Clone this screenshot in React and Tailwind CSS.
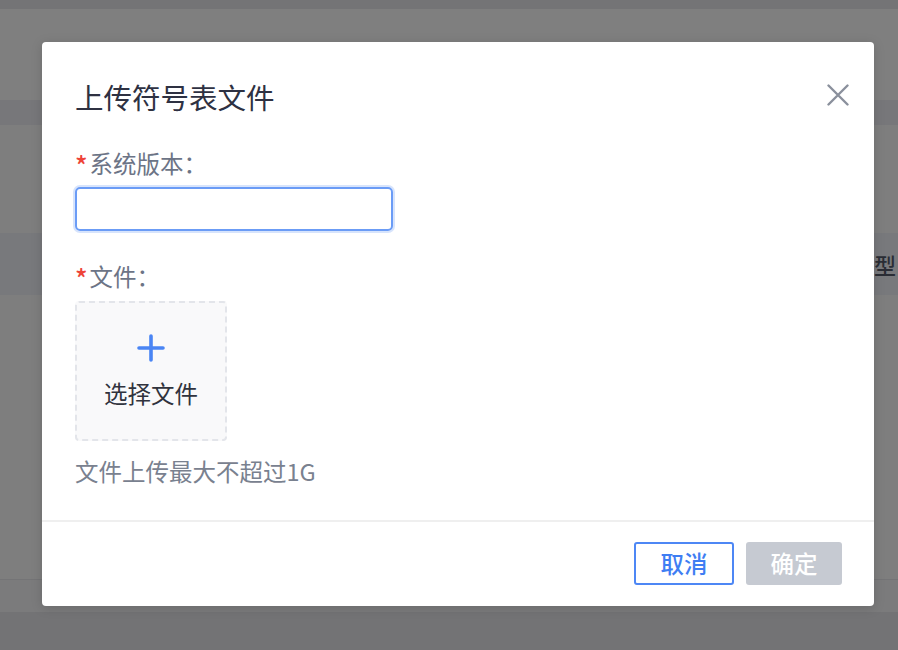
import React, { useState } from 'react';

const font = { fontFamily: '"Noto Sans CJK SC", "Noto Sans", sans-serif' };

const UploadSymbolDialog = () => {
    const [version, setVersion] = useState('');

    return (
        <div className="absolute left-[42px] top-[42px] w-[832px] h-[564px] bg-white rounded-[4px] shadow-[0_2px_12px_rgba(0,0,0,0.15)] flex flex-col">
            {/* Header */}
            <div className="relative pt-[38px] px-[33px]">
                <h2 className="text-[28.5px] leading-[34px] font-normal text-[#2e3142]">上传符号表文件</h2>
                <button className="absolute right-[25px] top-[42px] w-[22px] h-[22px] flex items-center justify-center">
                    <svg width="22" height="22" viewBox="0 0 22 22" fill="none">
                        <path d="M1.5 1.5 L20.5 20.5 M20.5 1.5 L1.5 20.5" stroke="#8a909c" strokeWidth="2.4" strokeLinecap="round" />
                    </svg>
                </button>
            </div>

            {/* Body */}
            <div className="px-[33px] flex-1">
                <label className="mt-[36px] flex items-center h-[28px] text-[23.5px] text-[#6c7486]">
                    <span className="text-[#ee4438] mr-[2px] text-[26px] font-medium leading-none mt-[2px]">*</span>
                    系统版本：
                </label>
                <input
                    value={version}
                    onChange={(e) => setVersion(e.target.value)}
                    className="mt-[9px] block w-[318px] h-[44px] px-3 rounded-[5px] border-2 border-[#6b9cf6] shadow-[0_0_0_2px_#d7e4fc] outline-none text-[22px] text-[#2e3142]"
                />

                <label className="mt-[32px] flex items-center h-[28px] text-[23.5px] text-[#6c7486]">
                    <span className="text-[#ee4438] mr-[2px] text-[26px] font-medium leading-none mt-[2px]">*</span>
                    文件：
                </label>
                <div className="mt-[10px] w-[152px] h-[140px] border-2 border-dashed border-[#e3e5ea] bg-[#f9f9fa] rounded-[4px] flex flex-col items-center">
                    <svg className="mt-[31px]" width="28" height="28" viewBox="0 0 28 28" fill="none">
                        <path d="M14 2 V26 M2 14 H26" stroke="#4a85f4" strokeWidth="3.6" strokeLinecap="round" />
                    </svg>
                    <span className="mt-[16px] text-[23.5px] leading-[30px] text-[#30333d]">选择文件</span>
                </div>
                <p className="mt-[16px] h-[28px] leading-[28px] text-[23.5px] text-[#79818f]">文件上传最大不超过1G</p>
            </div>

            {/* Footer */}
            <div className="border-t-2 border-[#efefef] flex justify-end gap-[12px] pt-[20px] pb-[21px] pr-[32px]">
                <button className="w-[100px] h-[43px] rounded-[3px] border-2 border-[#4d87f5] text-[#3f7ef3] text-[23.5px] font-medium">取消</button>
                <button disabled className="w-[96px] h-[43px] rounded-[3px] bg-[#c6cad2] text-white text-[23.5px] font-medium">确定</button>
            </div>
        </div>
    );
};

export default function App() {
    return (
        <div className="relative w-[898px] h-[650px] overflow-hidden" style={font}>
            {/* Dimmed page behind the dialog */}
            <div className="flex flex-col h-full">
                <div className="h-[9px] bg-[#747476]" />
                <div className="h-[91px] bg-[#7f7f7f]" />
                <div className="h-[25px] bg-[#77777a]" />
                <div className="h-[108px] bg-[#7e7e7e]" />
                <div className="h-[62px] bg-[#78797c] flex items-center justify-end pr-[2px]">
                    <span className="text-[22px] font-medium text-[#2a2d35]">类型</span>
                </div>
                <div className="h-[284px] bg-[#7e7e7e]" />
                <div className="h-[1px] bg-[#747476]" />
                <div className="h-[32px] bg-[#7b7b7c]" />
                <div className="flex-1 bg-[#737375]" />
            </div>

            <UploadSymbolDialog />
        </div>
    );
}
